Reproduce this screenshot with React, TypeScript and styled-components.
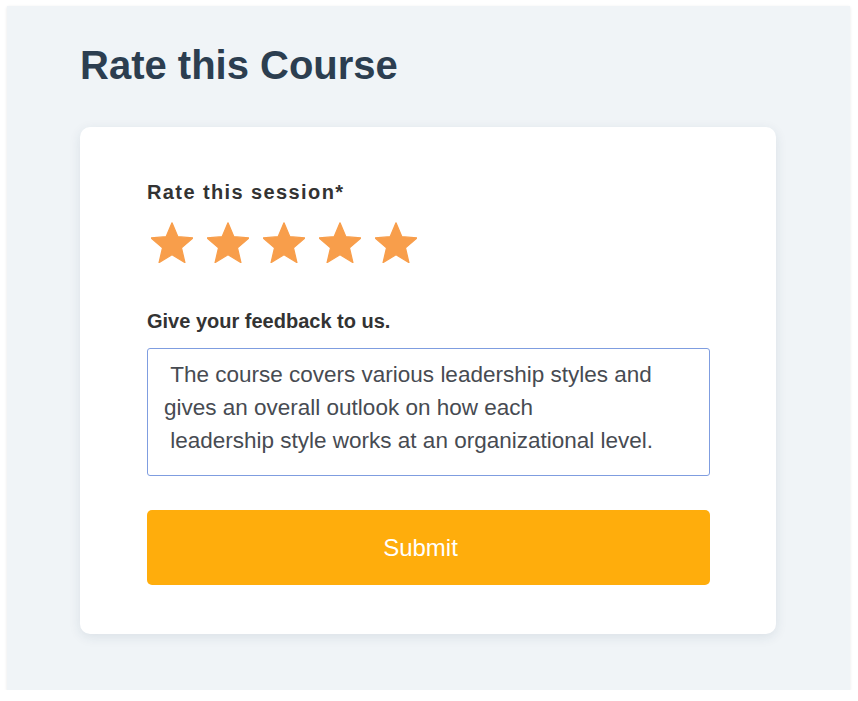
import styled, { createGlobalStyle } from "styled-components";

const GlobalStyle = createGlobalStyle`
  html, body {
    margin: 0;
    padding: 0;
    background: #ffffff;
  }
  body {
    padding: 6px 8px 0 7px;
    font-family: "Liberation Sans", Arial, sans-serif;
  }
`;

const Panel = styled.div`
  height: 684px;
  box-sizing: border-box;
  background-color: #f0f4f7;
  padding: 36px 74px 0 73px;
  box-shadow: 0 1px 3px rgba(0, 0, 0, 0.1);
`;

const Heading = styled.h1`
  margin: 0 0 39px;
  font-size: 40px;
  font-weight: 700;
  line-height: 46px;
  color: #2c3e50;
`;

const Card = styled.div`
  background-color: #ffffff;
  border-radius: 10px;
  padding: 54px 66px 49px 67px;
  box-shadow: 0 3px 12px rgba(30, 60, 90, 0.1);
`;

const Label = styled.label<{ $spacing?: number }>`
  display: block;
  font-size: 20px;
  font-weight: 700;
  line-height: 23px;
  color: #333333;
  letter-spacing: ${(p) => p.$spacing ?? 0}px;
`;

const Stars = styled.div`
  display: flex;
  gap: 14px;
  margin: 18px 0 47px 4px;
`;

const StarButton = styled.button`
  border: none;
  background: none;
  padding: 0;
  width: 42px;
  height: 41px;
  cursor: pointer;
  display: flex;
  svg {
    display: block;
  }
`;

const Feedback = styled.textarea`
  display: block;
  width: 100%;
  height: 128px;
  box-sizing: border-box;
  margin-top: 15px;
  padding: 9px 16px;
  border: 1px solid #7f9de0;
  border-radius: 3px;
  resize: none;
  outline: none;
  font-family: "Liberation Sans", Arial, sans-serif;
  font-size: 22.5px;
  line-height: 33px;
  color: #474b52;
  overflow: hidden;
`;

const SubmitButton = styled.button`
  display: block;
  width: 100%;
  height: 75px;
  margin-top: 34px;
  padding: 0 16px 0 0;
  border: none;
  border-radius: 5px;
  background-color: #ffad0c;
  color: #ffffff;
  font-family: "Liberation Sans", Arial, sans-serif;
  font-size: 24px;
  cursor: pointer;
`;

function Star() {
  return (
    <svg width="42" height="41" viewBox="2 1.6 20 19.6">
      <path
        d="M12 17.27L18.18 21l-1.64-7.03L22 9.24l-7.19-.61L12 2 9.19 8.63 2 9.24l5.46 4.73L5.82 21z"
        fill="#f89e4b"
        stroke="#f89e4b"
        strokeWidth="0.6"
        strokeLinejoin="round"
      />
    </svg>
  );
}

const feedbackText =
  " The course covers various leadership styles and\ngives an overall outlook on how each\n leadership style works at an organizational level.";

export default function App() {
  return (
    <>
      <GlobalStyle />
      <Panel>
        <Heading>Rate this Course</Heading>
        <Card>
          <Label $spacing={1.4}>Rate this session*</Label>
          <Stars>
            {[1, 2, 3, 4, 5].map((n) => (
              <StarButton key={n} aria-label={`${n} stars`}>
                <Star />
              </StarButton>
            ))}
          </Stars>
          <Label>Give your feedback to us.</Label>
          <Feedback defaultValue={feedbackText} />
          <SubmitButton>Submit</SubmitButton>
        </Card>
      </Panel>
    </>
  );
}
